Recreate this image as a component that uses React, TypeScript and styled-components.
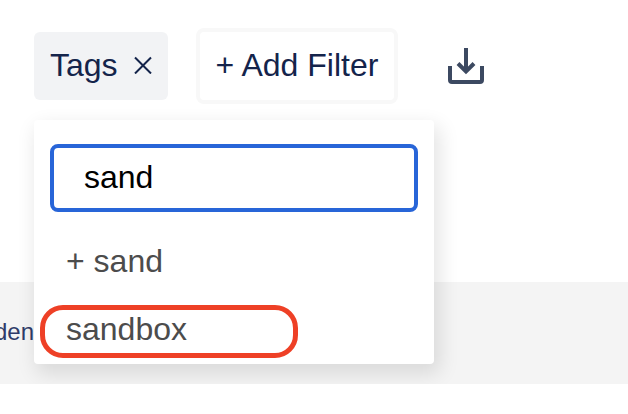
import { useState } from "react";
import styled, { createGlobalStyle } from "styled-components";

const GlobalStyle = createGlobalStyle`
  *, *::after { box-sizing: border-box; }
  body {
    margin: 0;
    background: #fff;
    overflow-x: hidden;
    font-family: "Liberation Sans", Arial, sans-serif;
  }
  button, input { font: inherit; margin: 0; }
`;

const Page = styled.main`
  padding-top: 28px;
`;

const Toolbar = styled.header`
  display: flex;
  align-items: center;
  gap: 28px;
  height: 76px;
  padding: 0 34px;
  font-size: 32px;
  line-height: 36px;
  color: #14244b;
`;

const FilterSlot = styled.div`
  position: relative;
`;

const Chip = styled.button`
  display: flex;
  align-items: center;
  gap: 16px;
  height: 68px;
  padding: 0 16px 2px;
  border: 0;
  border-radius: 6px;
  background: #f2f3f5;
  color: inherit;
  cursor: pointer;
`;

const AddButton = styled.button`
  height: 76px;
  padding: 0 16px 2px;
  border: 4px solid #f8f8f8;
  border-radius: 8px;
  background: #fff;
  color: inherit;
  white-space: nowrap;
  cursor: pointer;
`;

const IconButton = styled.button`
  display: flex;
  margin-left: 20px;
  padding: 0;
  border: 0;
  background: none;
  color: #3c4961;
  cursor: pointer;
`;

const Menu = styled.div`
  position: absolute;
  top: calc(100% + 20px);
  left: 0;
  width: 400px;
  padding: 24px 16px 0;
  border-radius: 4px;
  background: #fff;
  box-shadow: 4px 8px 20px 2px rgba(0, 0, 0, 0.11);
`;

const SearchInput = styled.input`
  display: block;
  width: 100%;
  height: 68px;
  padding: 0 30px 2px;
  border: 4px solid #2865d8;
  border-radius: 8px;
  outline: none;
  background: #fff;
  color: #000;
`;

const Options = styled.ul`
  margin: 16px 0 0;
  padding: 0;
  list-style: none;
`;

const Option = styled.li<{ $marked?: boolean }>`
  position: relative;

  &::after {
    content: ${(p) => (p.$marked ? '""' : "none")};
    position: absolute;
    top: 9px;
    left: -10px;
    width: 258px;
    height: 53px;
    border: 5px solid #ee4026;
    border-radius: 23px;
    pointer-events: none;
  }
`;

const OptionButton = styled.button`
  width: 100%;
  height: 68px;
  padding: 0 16px 2px;
  border: 0;
  background: none;
  color: #4c4c4c;
  text-align: left;
  cursor: pointer;
`;

const Band = styled.section`
  display: flex;
  align-items: center;
  height: 102px;
  margin-top: 178px;
  padding-bottom: 2px;
  background: #f4f4f4;
  color: #2e3b69;
  font-size: 24px;
  line-height: 28px;
`;

const ColumnLabel = styled.span`
  margin-left: -6px;
`;

export default function App() {
  const [query, setQuery] = useState("sand");

  return (
    <Page>
      <GlobalStyle />
      <Toolbar>
        <FilterSlot>
          <Chip type="button">
            Tags
            <svg width="18" height="18" viewBox="0 0 18 18" fill="none" stroke="currentColor" strokeWidth="2" aria-hidden="true">
              <path d="M1 1.500L17 17.500M17 1.500L1 17.500" />
            </svg>
          </Chip>
          <Menu>
            <SearchInput aria-label="Search tags" value={query} onChange={(e) => setQuery(e.target.value)} />
            <Options>
              <Option>
                <OptionButton type="button">+ {query}</OptionButton>
              </Option>
              <Option $marked>
                <OptionButton type="button">sandbox</OptionButton>
              </Option>
            </Options>
          </Menu>
        </FilterSlot>
        <AddButton type="button">+ Add Filter</AddButton>
        <IconButton type="button" aria-label="Download">
          <svg width="40" height="40" viewBox="0 0 40 40" fill="none" stroke="currentColor" strokeWidth="4" aria-hidden="true">
            <path d="M4 20V34Q4 36 6 36H34Q36 36 36 34V20" />
            <path d="M20 2V26" />
            <path d="M12 17.500L20 25.500L28 17.500" />
          </svg>
        </IconButton>
      </Toolbar>
      <Band>
        <ColumnLabel>den</ColumnLabel>
      </Band>
    </Page>
  );
}
